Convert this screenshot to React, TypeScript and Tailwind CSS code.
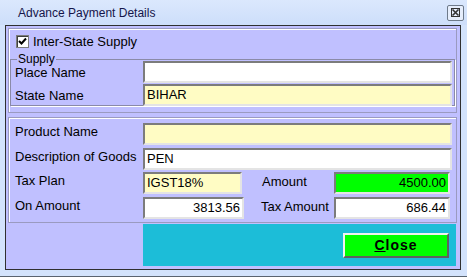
import React from 'react'

const field =
  'h-[22px] border-2 border-t-[#7c7c7c] border-l-[#7c7c7c] border-r-[#e4e4e4] border-b-[#e4e4e4] px-[2px] text-[13px] leading-[18px] text-black'

function Row({ label, lift = true, children }: { label: string; lift?: boolean; children: React.ReactNode }) {
  return (
    <div className="flex items-center h-[22px]">
      <span className={`w-[134px] shrink-0 text-[13px] leading-[16px] pl-[6px] ${lift ? '-mt-[4px]' : 'mt-[1px]'}`}>{label}</span>
      {children}
    </div>
  )
}

export default function App() {
  return (
    <div
      className="w-[467px] h-[277px] bg-[#d3e3fc] border-b border-[#5a6470] flex flex-col text-black"
      style={{ fontFamily: '"Liberation Sans", Arial, sans-serif' }}
    >
      {/* title bar */}
      <div className="h-[25px] shrink-0 flex items-center justify-between pl-[18px] pr-[3px] bg-gradient-to-b from-[#dbe8fd] to-[#cddefa]">
        <span className="text-[12px] text-[#15154a]">Advance Payment Details</span>
        <div className="w-[17px] h-[16px] rounded-[2px] border border-[#6e7a8a] bg-[#e6eefc] flex items-center justify-center">
          <svg width="9" height="9" viewBox="0 0 9 9">
            <path d="M1.5 1.5 L7.5 7.5 M7.5 1.5 L1.5 7.5" stroke="#333" strokeWidth="1.6" />
            <rect x="0.5" y="0.5" width="8" height="8" fill="none" stroke="#333" strokeWidth="1" />
          </svg>
        </div>
      </div>

      {/* client area */}
      <div className="ml-[5px] mr-[6px] h-[245px] border border-[#303030] bg-[#c0c0ff] flex flex-col pl-[2px] pr-[3px] pt-[2px]">
        {/* top panel */}
        <div className="h-[85px] border border-[#9a9ac0] shadow-[inset_1px_1px_0_#ffffff] px-[1px] pt-[5px]">
          <div className="flex items-center pl-[6px] h-[15px]">
            <div className="w-[13px] h-[13px] bg-white border border-[#7c7c7c] shadow-[inset_1px_1px_0_#404040] flex items-center justify-center">
              <svg width="9" height="9" viewBox="0 0 9 9">
                <path d="M1 4 L3.5 6.5 L8 1.5" stroke="#000" strokeWidth="2" fill="none" />
              </svg>
            </div>
            <span className="ml-[4px] text-[13px]">Inter-State Supply</span>
          </div>
          <fieldset className="mt-[4px] border border-[#8a8aa8] shadow-[1px_1px_0_#ffffff] h-[53px] pr-[2px]">
            <legend className="ml-[6px] px-[1px] text-[12px] leading-[12px]">Supply</legend>
            <div className="flex flex-col gap-[1px] -ml-[2px] -mt-[4px]">
              <Row label="Place Name" lift={false}>
                <div className={`${field} w-[309px] bg-white`} />
              </Row>
              <Row label="State Name" lift={false}>
                <div className={`${field} w-[309px] bg-[#fffcc4]`}>BIHAR</div>
              </Row>
            </div>
          </fieldset>
        </div>

        {/* product panel */}
        <div className="mt-[4px] h-[106px] border border-[#9a9ac0] shadow-[inset_1px_1px_0_#ffffff] pt-[5px] flex flex-col gap-[2.5px]">
          <Row label="Product Name">
            <div className={`${field} w-[309px] bg-[#fffcc4]`} />
          </Row>
          <Row label="Description of Goods">
            <div className={`${field} w-[309px] bg-white`}>PEN</div>
          </Row>
          <Row label="Tax Plan">
            <div className={`${field} w-[99px] bg-[#fffcc4]`}>IGST18%</div>
            <span className="w-[92px] text-[13px] -mt-[2px] pl-[20px]">Amount</span>
            <div className={`${field} w-[116px] bg-[#00ff00] text-right`}>4500.00</div>
          </Row>
          <Row label="On Amount">
            <div className={`${field} w-[101px] bg-white text-right`}>3813.56</div>
            <span className="w-[90px] text-[13px] -mt-[2px] pl-[17px]">Tax Amount</span>
            <div className={`${field} w-[116px] bg-white text-right`}>686.44</div>
          </Row>
        </div>

        {/* bottom */}
        <div className="mt-[1px] flex">
          <div className="w-[135px]" />
          <div className="w-[313px] h-[42px] bg-[#1cbdd8] flex items-center justify-end pr-[7px]">
            <button className="w-[106px] h-[25px] bg-[#00ff00] border-2 border-t-[#f0f0f0] border-l-[#f0f0f0] border-r-[#606060] border-b-[#606060] text-[14px] font-bold tracking-[1px]">
              <span className="underline">C</span>lose
            </button>
          </div>
        </div>
      </div>
    </div>
  )
}
